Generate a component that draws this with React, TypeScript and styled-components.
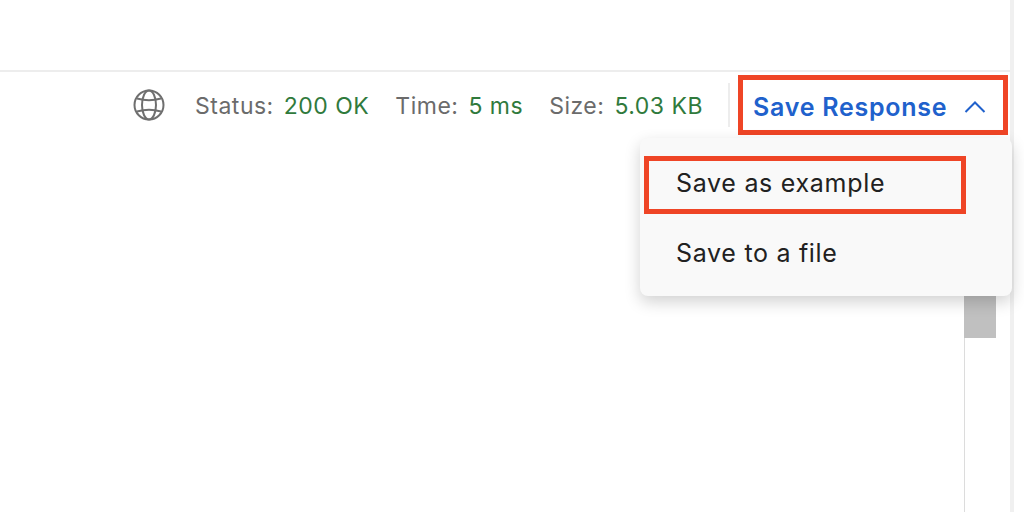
import React from "react";
import styled, { createGlobalStyle } from "styled-components";

const GlobalStyle = createGlobalStyle`
  html, body {
    margin: 0;
    padding: 0;
    background: #fff;
    overflow: hidden;
  }
  #root {
    height: 512px;
  }
`;

const Page = styled.div`
  display: flex;
  width: 1024px;
  height: 512px;
  font-family: Inter, "Liberation Sans", sans-serif;
`;

const Main = styled.div`
  display: flex;
  flex-direction: column;
  width: 1014px;
  box-sizing: border-box;
  height: 100%;
  border-right: 4px solid #f0f0f0;
  position: relative;
`;

const TopSpace = styled.div`
  height: 70px;
  flex-shrink: 0;
  border-bottom: 2px solid #ededed;
`;

const ResponseBar = styled.div`
  display: flex;
  align-items: center;
  justify-content: flex-end;
  height: 66px;
  flex-shrink: 0;
  box-sizing: border-box;
`;

const GlobeButton = styled.span`
  display: flex;
  margin-right: 30px;
  color: #6f6f6f;
`;

const StatGroup = styled.div`
  display: flex;
  gap: 26px;
  margin-right: 25px;
  padding-top: 2px;
`;

const Stat = styled.span`
  display: flex;
  gap: 10px;
  font-size: 23px;
  line-height: 28px;
  letter-spacing: 0.5px;
  color: #6b6b6b;
`;

const StatValue = styled.span`
  color: #307a3c;
`;

const Divider = styled.span`
  width: 2px;
  height: 44px;
  background: #ededed;
  margin-right: 8px;
`;

const SaveButton = styled.button`
  display: flex;
  align-items: center;
  box-sizing: border-box;
  width: 270px;
  height: 60px;
  margin: 0 2px 0 0;
  padding: 3px 0 0 10px;
  gap: 17px;
  background: none;
  border: 5px solid #ef4526;
  font: 600 25px/30px Inter, "Liberation Sans", sans-serif;
  letter-spacing: 0.75px;
  color: #2061cc;
`;

const Body = styled.div`
  flex: 1;
  display: flex;
  justify-content: flex-end;
`;

const ScrollTrack = styled.div`
  width: 45px;
  border-left: 1px solid #dcdcdc;
`;

const ScrollThumb = styled.div`
  width: 32px;
  height: 200px;
  margin-left: -1px;
  background: #c0c0c0;
`;

const Menu = styled.div`
  position: absolute;
  top: 138px;
  left: 640px;
  width: 372px;
  height: 158px;
  box-sizing: border-box;
  padding: 18px 4px 0;
  background: #f9f9f9;
  border-radius: 8px;
  box-shadow: 0 6px 16px rgba(0, 0, 0, 0.18);
`;

const MenuItem = styled.div<{ $marked?: boolean }>`
  box-sizing: border-box;
  width: 322px;
  height: 58px;
  margin-bottom: 12px;
  display: flex;
  align-items: center;
  padding-bottom: 4px;
  padding-left: ${(props) => (props.$marked ? "27px" : "32px")};
  border: ${(props) => (props.$marked ? "5px solid #ef4526" : "none")};
  font-size: 25px;
  letter-spacing: 0.7px;
  color: #212121;
`;

const Globe = () => (
  <svg width="32" height="32" viewBox="0 0 32 32" fill="none" stroke="currentColor" strokeWidth="2">
    <circle cx="16" cy="16" r="14.5" />
    <ellipse cx="16" cy="16" rx="7" ry="14.5" />
    <path d="M4 9.5c7 2 17 2 24 0M4 22.5c7-2 17-2 24 0" />
  </svg>
);

const ChevronUp = () => (
  <svg width="22" height="14" viewBox="0 0 22 14" fill="none" stroke="#2061cc" strokeWidth="2">
    <path d="M1.5 12 11 2.5 20.5 12" />
  </svg>
);

const App = () => {
  return (
    <Page>
      <GlobalStyle />
      <Main>
        <TopSpace />
        <ResponseBar>
          <GlobeButton>
            <Globe />
          </GlobeButton>
          <StatGroup>
            <Stat>
              Status: <StatValue>200 OK</StatValue>
            </Stat>
            <Stat>
              Time: <StatValue>5 ms</StatValue>
            </Stat>
            <Stat>
              Size: <StatValue>5.03 KB</StatValue>
            </Stat>
          </StatGroup>
          <Divider />
          <SaveButton>
            Save Response
            <ChevronUp />
          </SaveButton>
        </ResponseBar>
        <Body>
          <ScrollTrack>
            <ScrollThumb />
          </ScrollTrack>
        </Body>
        <Menu>
          <MenuItem $marked>Save as example</MenuItem>
          <MenuItem>Save to a file</MenuItem>
        </Menu>
      </Main>
    </Page>
  );
};

export default App;
